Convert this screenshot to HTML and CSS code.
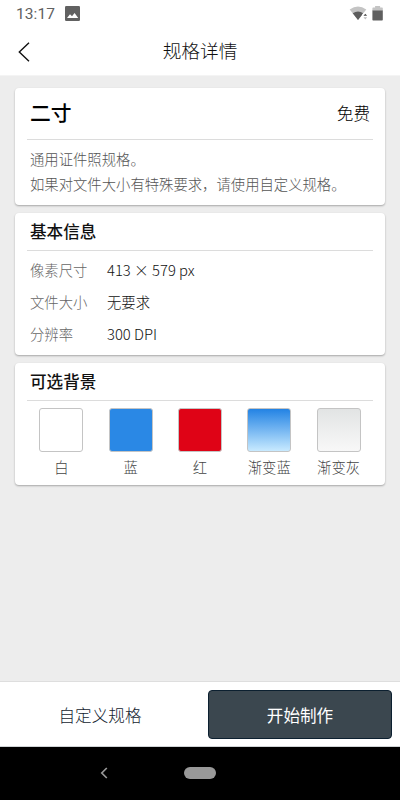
FILE: index.html
```html
<!DOCTYPE html>
<html lang="zh-CN">
<head>
<meta charset="utf-8">
<title>规格详情</title>
<link rel="stylesheet" href="styles.css">
</head>
<body>
<div class="status">
  <span class="clock">13:17</span>
  <svg class="photo" width="15" height="15" viewBox="0 0 15 15"><rect width="15" height="15" rx="1.3" fill="#616161"/><path d="M2 12 5 8.2l2 2.1L9.6 7l3.6 5z" fill="#fff"/></svg>
  <svg class="signal" width="36" height="16" viewBox="0 0 36 16"><path d="M.7 3.6Q9 -2.4 17.3 3.6L9 14z" fill="#c4c4c4"/><path d="M3.7 7.3Q9 3.9 14.3 7.3L9 14z" fill="#5c5c5c"/><circle cx="16.3" cy="10" r="3.2" fill="#fff"/><path d="M14.5 9.8 16.3 7.7l1.8 2.1z" fill="#444"/><path d="m14.5 11.3 1.8 2.1 1.8-2.1z" fill="#bbb"/><path d="M23.4 5V2.2q0-.7.7-.7h2V0h5v1.500h2q.7 0 .7.7V5z" fill="#c4c4c4"/><path d="M23.400 4.500h10.400v9.300q0 .7-.7.7h-9q-.7 0-.7-.7z" fill="#5f5f5f"/></svg>
</div>
<header class="header">
  <svg class="back" width="12" height="20" viewBox="0 0 12 20"><path d="M11 .8 1.300 10 11 19.200" fill="none" stroke="#111" stroke-width="1.400"/></svg>
  <h1>规格详情</h1>
</header>
<main class="content">
  <section class="card summary">
    <div class="summary-head"><h2>二寸</h2><span class="price">免费</span></div>
    <p class="note">通用证件照规格。<br>如果对文件大小有特殊要求，请使用自定义规格。</p>
  </section>
  <section class="card basic">
    <h3>基本信息</h3>
    <dl class="facts">
      <dt>像素尺寸</dt><dd class="latin">413 × 579 px</dd>
      <dt>文件大小</dt><dd>无要求</dd>
      <dt>分辨率</dt><dd class="latin">300 DPI</dd>
    </dl>
  </section>
  <section class="card backgrounds">
    <h3>可选背景</h3>
    <div class="swatches">
      <div class="option"><i class="swatch white"></i><span>白</span></div>
      <div class="option"><i class="swatch blue"></i><span>蓝</span></div>
      <div class="option"><i class="swatch red"></i><span>红</span></div>
      <div class="option"><i class="swatch fade-blue"></i><span>渐变蓝</span></div>
      <div class="option"><i class="swatch fade-gray"></i><span>渐变灰</span></div>
    </div>
  </section>
</main>
<footer class="actions">
  <button class="custom">自定义规格</button>
  <button class="start">开始制作</button>
</footer>
<nav class="system">
  <svg width="8" height="12" viewBox="0 0 8 12"><path d="M6.800 1 1.800 6l5 5" fill="none" stroke="#999" stroke-width="1.700"/></svg>
  <span class="home"></span>
</nav>
</body>
</html>
```
FILE: styles.css
```css
* { box-sizing: border-box; margin: 0; padding: 0; }
body {
  width: 400px; height: 800px; overflow: hidden;
  display: flex; flex-direction: column;
  background: #ededed; color: #111;
  font-family: "Noto Sans CJK SC", sans-serif;
  font-weight: 300;
}
.status { height: 28px; background: #fff; display: flex; align-items: center; padding: 0 16px; }
.clock { width: 40px; font: 400 15.5px/28px Roboto, sans-serif; color: #616161; letter-spacing: .1px; }
.photo { margin: -1px 0 0 9px; }
.signal { margin: -1px -1px 0 auto; }
.header { height: 48px; background: #fff; border-bottom: 1px solid #f4f4f4; display: grid; grid-template-columns: 40px 1fr 40px; align-items: center; }
.header h1 { font-size: 18.7px; line-height: 28px; font-weight: 300; text-align: center; margin-top: -3px; }
.back { margin: 1px 0 0 18px; }
.content { flex: 1; padding: 12px 15px; display: flex; flex-direction: column; gap: 8px; }
.card { background: #fff; border-radius: 4px; padding: 0 12px; box-shadow: 0 1px 2px rgba(0, 0, 0, .3); }
.summary { height: 117px; }
.summary-head { height: 52px; padding: 0 3px 2px; display: flex; align-items: center; justify-content: space-between; border-bottom: 1px solid #dcdcdc; }
.summary h2 { font-size: 20.800px; line-height: 30px; font-weight: 500; color: #000; margin-top: -2px; }
.price { font-size: 16.600px; color: #000; }
.note { padding: 6px 3px; font-size: 14.350px; line-height: 25px; color: #555; white-space: nowrap; }
.basic { height: 142px; }
.card h3 { height: 38px; padding-left: 3px; font-size: 16.600px; line-height: 36px; font-weight: 500; border-bottom: 1px solid #dcdcdc; }
.facts { display: grid; grid-template-columns: 77px 1fr; grid-auto-rows: 32px; padding: 3px 3px 0; font-size: 14.350px; line-height: 32px; }
.facts dt { color: #666; }
.facts .latin { font-size: 14.800px; line-height: 31px; }
.backgrounds { height: 122px; }
.swatches { display: flex; padding-top: 7px; margin: 0 -.3px; }
.option { flex: 1; display: flex; flex-direction: column; align-items: center; font-size: 14.350px; line-height: 22px; color: #444; }
.swatch { width: 44px; height: 44px; margin-bottom: 4px; border: 1px solid #c4c4c4; border-radius: 3px; }
.white { background: #fff; }
.blue { background: #2a88e5; }
.red { background: #df0316; }
.fade-blue { background: linear-gradient(#2383e4, #c8eaff); }
.fade-gray { background: linear-gradient(#e2e4e4, #f8f8f8); }
.actions { height: 66px; background: #fff; border-top: 1px solid #dedede; border-bottom: 1px solid #d0d4d6; padding: 8px 8px 7px; display: flex; gap: 8px; }
.actions button { height: 49px; border: 0; border-radius: 4px; font: 300 16.600px/24px "Noto Sans CJK SC", sans-serif; }
.custom { width: 192px; padding-right: 8px; background: #fff; color: #142430; }
.actions .start { width: 184px; border: 1px solid #0c2030; background: #3b474f; color: #fff; font-weight: 400; }
.system { height: 53px; background: #000; display: flex; align-items: center; padding: 0 0 1px 100px; }
.home { width: 32px; height: 12px; border-radius: 6px; background: #999; margin-left: 76px; }
```
